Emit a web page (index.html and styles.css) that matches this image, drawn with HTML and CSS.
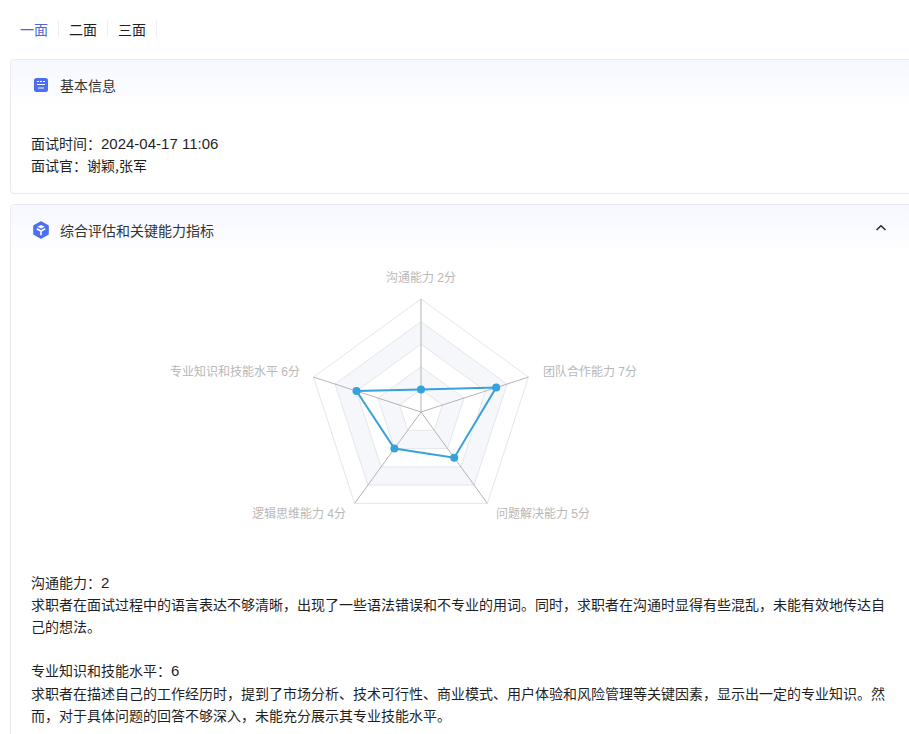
FILE: index.html
```html
<!DOCTYPE html>
<html lang="zh-CN">
<head>
<meta charset="utf-8">
<title>面试评估</title>
<link rel="stylesheet" href="styles.css">
</head>
<body>
<nav class="tabs">
  <span class="tab tab-active">一面</span>
  <span class="tab">二面</span>
  <span class="tab">三面</span>
</nav>
<section class="card card-basic">
  <header class="card-head">
    <svg class="icon" viewBox="0 0 14 14"><rect width="14" height="14" rx="2.500" fill="#4c6ef0"/><path d="M3 3.500h2M6 3.500h2M9 3.500h2M3 6.500h8M4 10h6" stroke="#fff" stroke-width="1" fill="none"/></svg>
    <h2 class="card-title">基本信息</h2>
  </header>
  <div class="card-body basic-body">
    <p>面试时间：<span class="num">2024-04-17 11:06</span></p>
    <p>面试官：谢颖,张军</p>
  </div>
</section>
<section class="card card-eval">
  <header class="card-head">
    <svg class="icon icon-hex" viewBox="0 0 16 18"><path d="M7.300.4a1.500 1.500 0 0 1 1.400 0l6.300 3.500a1.500 1.500 0 0 1 .8 1.300v7.600a1.500 1.500 0 0 1-.8 1.300l-6.300 3.500a1.500 1.500 0 0 1-1.400 0L1 14.100a1.500 1.500 0 0 1-.8-1.300V5.200A1.500 1.500 0 0 1 1 3.900Z" fill="#4c6ef0"/><path d="M4.300 5.700 8 3.900l3.700 1.800L8 7.500Z" fill="#fff"/><path d="M3.700 7.700 8 10l4.300-2.300M8 10v4.300" stroke="#fff" stroke-width="1.600" fill="none"/></svg>
    <h2 class="card-title">综合评估和关键能力指标</h2>
    <svg class="chevron" viewBox="0 0 12 8"><path d="M1.500 6 6 1.800 10.500 6" stroke="#262626" stroke-width="1.500" fill="none"/></svg>
  </header>
  <div class="chart-wrap">
    <svg class="radar" viewBox="0 0 899 285" width="899" height="285">
      <g transform="translate(410 157)">
        <path class="ring" d="M0-113L107.500-34.900 66.400 91.400H-66.400L-107.500-34.900Z"/>
        <path class="band ring" d="M0-90.400L86-27.900 53.100 73.100H-53.100L-86-27.900ZM0-67.800L64.500-21 39.900 54.900H-39.900L-64.500-21Z"/>
        <path class="band ring" d="M0-45.200L43-14 26.600 36.600H-26.600L-43-14ZM0-22.600L21.500-7 13.300 18.300H-13.300L-21.500-7Z"/>
        <path class="spoke" d="M0 0V-113M0 0L107.500-34.900M0 0L66.400 91.400M0 0L-66.400 91.400M0 0L-107.500-34.900"/>
        <path class="series" d="M0-22.600L75.200-24.400 33.200 45.700-26.600 36.600-64.500-21Z"/>
        <g class="dots">
          <circle cx="0" cy="-22.600" r="4"/>
          <circle cx="75.200" cy="-24.400" r="4"/>
          <circle cx="33.200" cy="45.700" r="4"/>
          <circle cx="-26.600" cy="36.600" r="4"/>
          <circle cx="-64.500" cy="-21" r="4"/>
        </g>
      </g>
      <g class="labels">
        <text x="410" y="27" text-anchor="middle">沟通能力 2分</text>
        <text x="532" y="121">团队合作能力 7分</text>
        <text x="485" y="263">问题解决能力 5分</text>
        <text x="335" y="263" text-anchor="end">逻辑思维能力 4分</text>
        <text x="289" y="121" text-anchor="end">专业知识和技能水平 6分</text>
      </g>
    </svg>
  </div>
  <div class="card-body eval-body">
    <p>沟通能力：<span class="num">2</span></p>
    <p>求职者在面试过程中的语言表达不够清晰，出现了一些语法错误和不专业的用词。同时，求职者在沟通时显得有些混乱，未能有效地传达自己的想法。</p>
    <p class="gap">专业知识和技能水平：<span class="num">6</span></p>
    <p>求职者在描述自己的工作经历时，提到了市场分析、技术可行性、商业模式、用户体验和风险管理等关键因素，显示出一定的专业知识。然而，对于具体问题的回答不够深入，未能充分展示其专业技能水平。</p>
  </div>
</section>
</body>
</html>
```
FILE: styles.css
```css
html { overflow: hidden; }
body {
  margin: 0;
  background: #fff;
  color: #1f1f1f;
  font-family: "Noto Sans CJK SC", "Liberation Sans", sans-serif;
  font-size: 14px;
  line-height: 22.4px;
  overflow: hidden;
}
.tabs {
  display: flex;
  padding: 21px 0 0 20px;
  height: 37px;
  box-sizing: border-box;
}
.tab {
  height: 16px;
  line-height: 16px;
  padding-right: 10px;
  margin-right: 10px;
  border-right: 1px solid #eceef2;
  color: #1f1f1f;
}
.tab-active { color: #4a66d8; }
.card {
  margin: 0 -6px 0 10px;
  border: 1px solid #e8eaef;
  border-radius: 4px;
  background: #fff;
}
.card-basic { height: 135px; box-sizing: border-box; margin-top: 22px; }
.card-eval { margin-top: 10px; }
.card-head {
  display: flex;
  align-items: center;
  height: 50px;
  padding: 0 26px 0 23px;
  background: linear-gradient(180deg, #f6f8ff 0%, #ffffff 100%);
  border-radius: 4px 4px 0 0;
}
.icon { width: 14px; height: 14px; flex: none; margin-right: 12px; }
.icon-hex { width: 16px; height: 18px; margin-left: -1px; margin-right: 11px; }
.card-title {
  margin: 0;
  font-size: 14px;
  font-weight: 400;
  color: #333;
  flex: 1;
}
.chevron { width: 12px; height: 8px; flex: none; margin-top: -4px; margin-right: 1px; }
.card-body { padding: 0 20px; }
.card-body p { margin: 0; }
.basic-body { padding-top: 22px; line-height: 22px; }
.num { font-family: "Liberation Sans", sans-serif; font-size: 15px; line-height: 1; }
.chart-wrap { height: 293px; }
.radar { display: block; }
.ring { fill: #fff; stroke: #e4e6eb; stroke-width: 1; }
.band { fill: #f5f7fb; fill-rule: evenodd; }
.spoke { fill: none; stroke: #b4b4b4; stroke-width: 1; }
.series { fill: none; stroke: #37a2da; stroke-width: 2; }
.dots circle { fill: #37a2da; }
.labels text {
  font-family: "Liberation Sans", "Noto Sans CJK SC", sans-serif;
  font-size: 12px;
  fill: #b8b8b8;
}
.eval-body { padding-top: 22.5px; padding-right: 26px; padding-bottom: 60px; }
.gap { margin-top: 21.4px !important; }
```
